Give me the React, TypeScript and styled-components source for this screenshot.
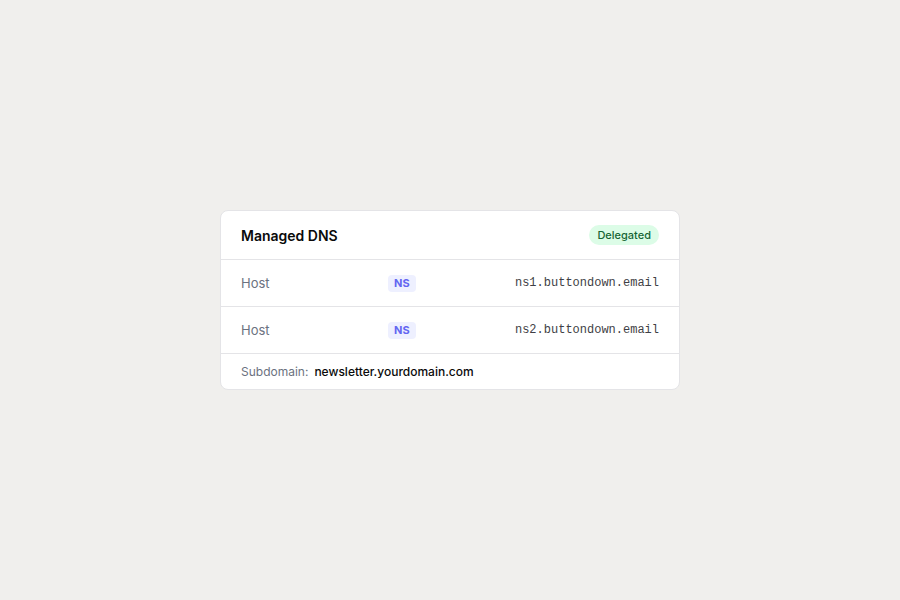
import React from "react";
import styled, { createGlobalStyle } from "styled-components";

const Global = createGlobalStyle`
  html, body { margin: 0; padding: 0; }
  body {
    background: #f0efed;
    font-family: Inter, "Noto Sans", sans-serif;
    -webkit-font-smoothing: antialiased;
  }
`;

const Page = styled.div`
  width: 900px;
  height: 600px;
  display: flex;
  align-items: center;
  justify-content: center;
`;

const Card = styled.div`
  width: 460px;
  box-sizing: border-box;
  background: #ffffff;
  border: 1px solid #e4e4e7;
  border-radius: 8px;
  overflow: hidden;
`;

const Header = styled.div`
  height: 49px;
  box-sizing: border-box;
  padding: 0 20px;
  display: flex;
  align-items: center;
  justify-content: space-between;
  border-bottom: 1px solid #e4e4e7;
`;

const Title = styled.div`
  font-size: 14px;
  font-weight: 600;
  color: #0a0a0a;
`;

const StatusBadge = styled.span`
  display: inline-flex;
  align-items: center;
  height: 20px;
  padding: 0 8px;
  border-radius: 10px;
  background: #dcfce7;
  color: #166534;
  font-size: 11px;
  font-weight: 500;
`;

const Row = styled.div`
  height: 47px;
  box-sizing: border-box;
  padding: 0 20px;
  display: grid;
  grid-template-columns: 147px auto 1fr;
  align-items: center;
  border-bottom: 1px solid #e4e4e7;
`;

const HostLabel = styled.span`
  font-size: 13px;
  color: #6b7280;
`;

const TypeBadge = styled.span`
  display: inline-flex;
  align-items: center;
  justify-content: center;
  height: 17px;
  padding: 0 6px;
  border-radius: 4px;
  background: #eef0ff;
  color: #6366f1;
  font-size: 11px;
  font-weight: 700;
`;

const Value = styled.span`
  justify-self: end;
  font-family: "Liberation Mono", "Courier New", monospace;
  font-size: 12px;
  color: #3f3f46;
`;

const Footer = styled.div`
  height: 35px;
  padding: 0 20px;
  display: flex;
  align-items: center;
  gap: 6px;
`;

const FooterLabel = styled.span`
  font-size: 12px;
  color: #6b7280;
`;

const FooterValue = styled.span`
  font-size: 12px;
  font-weight: 500;
  color: #0a0a0a;
`;

const records = ["ns1.buttondown.email", "ns2.buttondown.email"];

export default function App() {
  return (
    <>
      <Global />
      <Page>
        <Card>
          <Header>
            <Title>Managed DNS</Title>
            <StatusBadge>Delegated</StatusBadge>
          </Header>
          {records.map((r) => (
            <Row key={r}>
              <HostLabel>Host</HostLabel>
              <TypeBadge>NS</TypeBadge>
              <Value>{r}</Value>
            </Row>
          ))}
          <Footer>
            <FooterLabel>Subdomain:</FooterLabel>
            <FooterValue>newsletter.yourdomain.com</FooterValue>
          </Footer>
        </Card>
      </Page>
    </>
  );
}
